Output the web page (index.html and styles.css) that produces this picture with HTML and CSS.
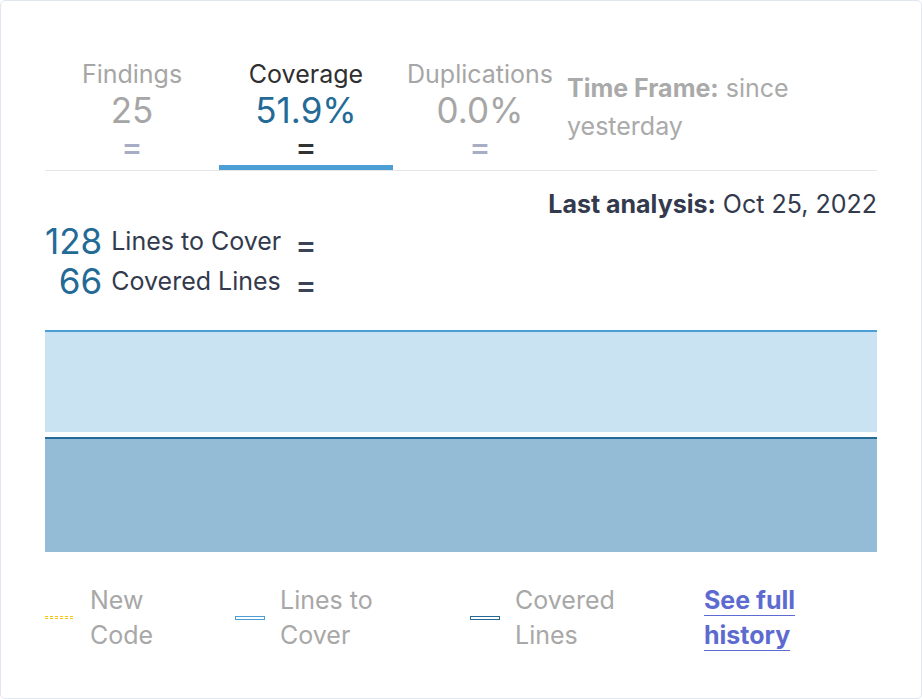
FILE: index.html
```html
<!DOCTYPE html>
<html lang="en">
<head>
<meta charset="utf-8">
<title>Coverage</title>
<link rel="stylesheet" href="styles.css">
</head>
<body>
<div class="card">
  <div class="tabbar">
    <div class="tab">
      <div class="tab-label">Findings</div>
      <div class="tab-value">25</div>
      <div class="tab-eq">=</div>
    </div>
    <div class="tab active">
      <div class="tab-label">Coverage</div>
      <div class="tab-value">51.9%</div>
      <div class="tab-eq">=</div>
    </div>
    <div class="tab">
      <div class="tab-label">Duplications</div>
      <div class="tab-value">0.0%</div>
      <div class="tab-eq">=</div>
    </div>
    <div class="timeframe"><strong>Time Frame:</strong> since yesterday</div>
  </div>

  <div class="last-analysis"><strong>Last analysis:</strong> Oct 25, 2022</div>

  <div class="measures">
    <div class="m-num">128</div>
    <div class="m-label">Lines to Cover</div>
    <div class="m-eq">=</div>
    <div class="m-num">66</div>
    <div class="m-label">Covered Lines</div>
    <div class="m-eq">=</div>
  </div>

  <div class="chart">
    <svg width="832" height="222" viewBox="0 0 832 222">
      <rect x="0" y="0" width="832" height="222" fill="#cae3f2"/>
      <rect x="0" y="0" width="832" height="2" fill="#4b9fd5"/>
      <rect x="0" y="102" width="832" height="5" fill="#ffffff"/>
      <rect x="0" y="107" width="832" height="115" fill="#94bcd6"/>
      <rect x="0" y="107" width="832" height="2" fill="#236a97"/>
    </svg>
  </div>

  <div class="legend">
    <div class="legend-item">
      <svg class="swatch" width="30" height="4" viewBox="0 0 30 4">
        <line x1="0" y1="0.5" x2="30" y2="0.5" stroke="#f5c518" stroke-width="1" stroke-dasharray="3 2"/>
        <line x1="0" y1="2.5" x2="30" y2="2.5" stroke="#f5c518" stroke-width="1" stroke-dasharray="3 2"/>
      </svg>
      <span class="legend-text">New Code</span>
    </div>
    <div class="legend-item">
      <svg class="swatch" width="30" height="4" viewBox="0 0 30 4">
        <rect x="0.5" y="0.5" width="29" height="3" fill="#ffffff" stroke="#4b9fd5" stroke-width="1"/>
      </svg>
      <span class="legend-text">Lines to Cover</span>
    </div>
    <div class="legend-item">
      <svg class="swatch" width="30" height="4" viewBox="0 0 30 4">
        <rect x="0.5" y="0.5" width="29" height="3" fill="#ffffff" stroke="#236a97" stroke-width="1"/>
      </svg>
      <span class="legend-text">Covered Lines</span>
    </div>
    <div class="legend-item">
      <span class="legend-text"><a class="history-link" href="#">See full history</a></span>
    </div>
  </div>
</div>
</body>
</html>
```

FILE: styles.css
```css
html, body {
  margin: 0;
  padding: 0;
  background: #ffffff;
}

body {
  font-family: Inter, "Noto Sans", sans-serif;
  font-size: 25px;
  color: #333a4d;
}

.card {
  box-sizing: border-box;
  width: 922px;
  height: 699px;
  border: 1px solid #e1e6f3;
  border-radius: 5px;
  padding: 58px 44px 0 44px;
}

.tabbar {
  display: flex;
  align-items: flex-start;
  border-bottom: 1px solid #e6e6e6;
}

.tab {
  width: 174px;
  flex: none;
  display: flex;
  flex-direction: column;
  align-items: center;
  padding-bottom: 1px;
  border-bottom: 5px solid transparent;
}

.tab.active {
  border-bottom-color: #4b9fd5;
}

.tab-label {
  font-size: 25px;
  line-height: 30px;
  color: #a6a6a6;
}

.tab-value {
  font-size: 35px;
  line-height: 36px;
  margin-top: 3px;
  color: #a6a6a6;
}

.tab-eq {
  font-size: 32px;
  font-weight: 500;
  line-height: 34px;
  margin-top: 2px;
  color: #a6adc4;
}

.tab.active .tab-label {
  color: #2f2f2f;
}

.tab.active .tab-value {
  color: #236a97;
}

.tab.active .tab-eq {
  color: #333333;
}

.timeframe {
  flex: 1;
  margin-top: 10px;
  font-size: 25px;
  line-height: 38px;
  color: #aaaaaa;
}

.timeframe strong {
  font-weight: 700;
}

.last-analysis {
  margin-top: 18px;
  text-align: right;
  line-height: 30px;
  color: #333a4d;
}

.last-analysis strong {
  font-weight: 700;
}

.measures {
  margin-top: 2px;
  display: grid;
  grid-template-columns: auto auto auto;
  justify-content: start;
  align-items: center;
}

.m-num {
  font-size: 35px;
  line-height: 40px;
  color: #236a97;
  justify-self: end;
}

.m-label {
  font-size: 25px;
  line-height: 30px;
  margin-left: 9px;
  color: #333a4d;
}

.m-eq {
  font-size: 32px;
  font-weight: 500;
  line-height: 30px;
  margin-left: 14px;
  padding-top: 8px;
  color: #3c4257;
}

.chart {
  margin-top: 29px;
  height: 222px;
}

.chart svg {
  display: block;
}

.legend {
  margin-top: 31px;
  display: grid;
  grid-template-columns: 190px 235px 234px auto;
}

.legend-item {
  display: flex;
  align-items: center;
}

.swatch {
  flex: none;
  display: block;
  margin-right: 15px;
}

.legend-text {
  width: 110px;
  font-size: 25px;
  line-height: 35px;
  color: #a8a8a8;
}

.history-link {
  color: #5d6bd0;
  font-weight: 700;
  text-decoration: none;
  border-bottom: 1px solid #5d6bd0;
}
```
